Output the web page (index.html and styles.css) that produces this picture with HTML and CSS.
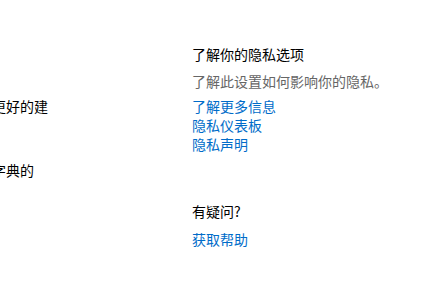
FILE: index.html
```html
<!DOCTYPE html>
<html lang="zh-CN">
  <head>
    <meta charset="UTF-8" />
    <meta name="viewport" content="width=device-width, initial-scale=1.0" />
    <title>隐私</title>
    <link rel="stylesheet" href="styles.css">
  </head>
  <body>
    <div class="page">
      <div class="main-col">
        <p class="desc first">更好的建</p>
        <p class="desc second">字典的</p>
      </div>
      <aside class="side-col">
        <h2 class="side-title">了解你的隐私选项</h2>
        <p class="side-text">了解此设置如何影响你的隐私。</p>
        <ul class="links">
          <li><a href="#">了解更多信息</a></li>
          <li><a href="#">隐私仪表板</a></li>
          <li><a href="#">隐私声明</a></li>
        </ul>
        <h2 class="side-title question">有疑问?</h2>
        <a class="help-link" href="#">获取帮助</a>
      </aside>
    </div>
  </body>
</html>
```

FILE: styles.css
```css
html, body {
  margin: 0;
  padding: 0;
  background: #ffffff;
  height: 100%;
  overflow: hidden;
}
body {
  font-family: "Noto Sans CJK SC", "Noto Sans", sans-serif;
  font-size: 14px;
  line-height: 20px;
  color: #000000;
}

.page {
  display: flex;
  align-items: flex-start;
}

.main-col {
  width: 200px;
  margin-left: -8px;
  white-space: nowrap;
}
.desc {
  margin: 0;
}
.desc.first {
  margin-top: 96px;
}
.desc.second {
  margin-top: 44px;
}

.side-col {
  padding-top: 44px;
}
.side-title {
  margin: 0;
  font-size: 14px;
  font-weight: normal;
  line-height: 20px;
}
.side-text {
  margin: 7px 0 0;
  color: #666666;
}
.links {
  list-style: none;
  margin: 6px 0 0;
  padding: 0;
}
.links li {
  line-height: 19px;
}
.links a,
.help-link {
  color: #006cc9;
  text-decoration: none;
}
.question {
  margin-top: 47px;
}
.help-link {
  display: block;
  margin-top: 8px;
}
```
